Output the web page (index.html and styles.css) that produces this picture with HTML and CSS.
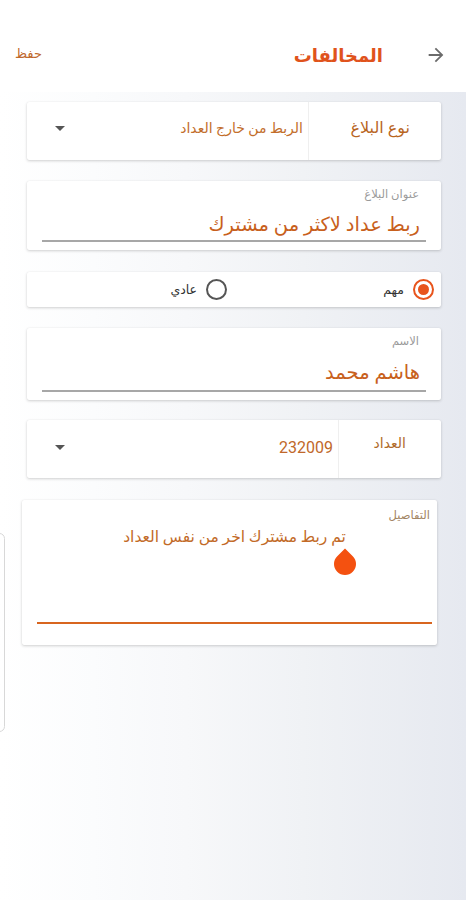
FILE: index.html
```html
<!DOCTYPE html>
<html lang="ar" dir="rtl">
<head>
<meta charset="utf-8">
<title>المخالفات</title>
<link rel="stylesheet" href="styles.css">
</head>
<body>
<div class="app">
  <header class="topbar">
    <svg class="back" viewBox="0 0 24 24" width="22" height="22"><path d="M12 4l-1.41 1.41L16.17 11H4v2h12.17l-5.58 5.59L12 20l8-8z" fill="#6b6b6b"/></svg>
    <h1 class="title">المخالفات</h1>
    <span class="save">حفظ</span>
  </header>

  <main class="form">
    <section class="card select-card type-card">
      <div class="sel-label sel-label-type">نوع البلاغ</div>
      <div class="sel-value">
        <span class="sel-text">الربط من خارج العداد</span>
        <span class="caret"></span>
      </div>
    </section>

    <section class="card field-card">
      <div class="field-label">عنوان البلاغ</div>
      <div class="field-value">ربط عداد لاكثر من مشترك</div>
      <div class="field-line"></div>
    </section>

    <section class="card radio-card">
      <div class="radio-item">
        <span class="radio on"></span>
        <span class="radio-text">مهم</span>
      </div>
      <div class="radio-item">
        <span class="radio"></span>
        <span class="radio-text">عادي</span>
      </div>
    </section>

    <section class="card field-card name-card">
      <div class="field-label">الاسم</div>
      <div class="field-value">هاشم محمد</div>
      <div class="field-line"></div>
    </section>

    <section class="card select-card meter-card">
      <div class="sel-label sel-label-meter">العداد</div>
      <div class="sel-value">
        <span class="sel-text num">232009</span>
        <span class="caret"></span>
      </div>
    </section>

    <section class="card details-card">
      <div class="field-label details-label">التفاصيل</div>
      <div class="details-text">تم ربط مشترك اخر من نفس العداد</div>
      <div class="drop-wrap"><span class="drop"></span></div>
      <div class="details-line"></div>
    </section>
  </main>
  <div class="edge"></div>
</div>
</body>
</html>
```

FILE: styles.css
```css
* { box-sizing: border-box; }
html, body { margin: 0; padding: 0; }
body {
  width: 466px;
  height: 900px;
  overflow: hidden;
  font-family: Roboto, "DejaVu Sans", sans-serif;
  background: #fff;
}
.app {
  position: relative;
  height: 900px;
  background: linear-gradient(90deg, #ffffff 0%, #fbfcfd 20%, #f7f8fa 40%, #f0f2f5 65%, #e6e9f0 100%);
}
.topbar {
  height: 92px;
  background: #fff;
  display: flex;
  align-items: center;
  padding: 18px 19px 0 15px;
}
.back { flex: none; margin-left: 42px; }
.title {
  margin: 0;
  font-size: 18px;
  font-weight: bold;
  color: #e0531c;
  flex: 1;
}
.save {
  font-size: 13px;
  color: #c0692c;
  margin-top: -4px;
}
.form {
  display: flex;
  flex-direction: column;
  padding: 10px 25px 0 27px;
}
.card {
  background: #fff;
  border-radius: 2px;
  box-shadow: 0 1px 3px rgba(0,0,0,0.18), 0 0 1px rgba(0,0,0,0.08);
}
.select-card {
  height: 58px;
  display: flex;
  margin-bottom: 21px;
}
.sel-label {
  font-size: 16px;
  line-height: 20px;
  color: #b8651f;
  border-left: 1px solid #efefef;
  padding-top: 16px;
}
.sel-label-type { width: 133px; padding-right: 31px; }
.sel-label-meter { width: 103px; padding-right: 35px; padding-top: 13px; font-size: 14px; color: #b06a2a; }
.sel-value {
  flex: 1;
  display: flex;
  justify-content: space-between;
  align-items: center;
  padding: 0 5px 6px 28px;
}
.meter-card .sel-value { padding-bottom: 4px; }
.sel-text {
  font-size: 14px;
  color: #c26d2a;
}
.sel-text.num { font-size: 16px; color: #c0682a; }
.caret {
  width: 0; height: 0;
  border-left: 5px solid transparent;
  border-right: 5px solid transparent;
  border-top: 5px solid #555;
}
.field-card {
  height: 69px;
  padding: 7px 15px 0 15px;
  margin-bottom: 22px;
}
.name-card { height: 72px; margin-bottom: 20px; }
.field-label {
  font-size: 11.5px;
  color: #9a9a9a;
  padding-right: 7px;
  line-height: 12px;
}
.field-value {
  font-size: 19.5px;
  color: #c8601c;
  padding-right: 6px;
  line-height: 28px;
  margin-top: 11px;
}
.name-card .field-value { margin-top: 12px; }
.field-line {
  height: 2px;
  background: #a7a7a7;
  margin-top: 1px;
}
.name-card .field-line { margin-top: 3px; }
.radio-card {
  height: 35px;
  display: grid;
  grid-template-columns: 1fr 1fr;
  margin-bottom: 21px;
}
.radio-item {
  display: flex;
  align-items: center;
  gap: 9px;
  padding-right: 7px;
}
.radio {
  width: 21px; height: 21px;
  border: 2px solid #555;
  border-radius: 50%;
  display: flex;
  align-items: center;
  justify-content: center;
}
.radio.on { border-color: #e8541c; }
.radio.on::after {
  content: "";
  width: 11px; height: 11px;
  border-radius: 50%;
  background: #e8541c;
}
.radio-text { font-size: 12.5px; color: #333; }
.details-card {
  height: 145px;
  margin: 1px 4px 0 -5px;
  padding: 7px 5px 0 15px;
}
.details-label { padding-right: 2px; line-height: 16px; color: #a28563; }
.details-text {
  text-align: center;
  font-size: 15.5px;
  color: #c26a27;
  margin-top: 3px;
  line-height: 22px;
}
.drop-wrap {
  height: 74px;
  padding-top: 5px;
}
.drop {
  display: block;
  width: 22px; height: 22px;
  margin-right: 76px;
  background: #f45110;
  border-radius: 50% 0 50% 50%;
  transform: rotate(-45deg);
}
.details-line {
  height: 2px;
  background: #d8651f;
}
.edge {
  position: absolute;
  left: -6px;
  top: 533px;
  width: 11px;
  height: 199px;
  border: 1px solid #d8d8d8;
  border-radius: 6px;
}
```
